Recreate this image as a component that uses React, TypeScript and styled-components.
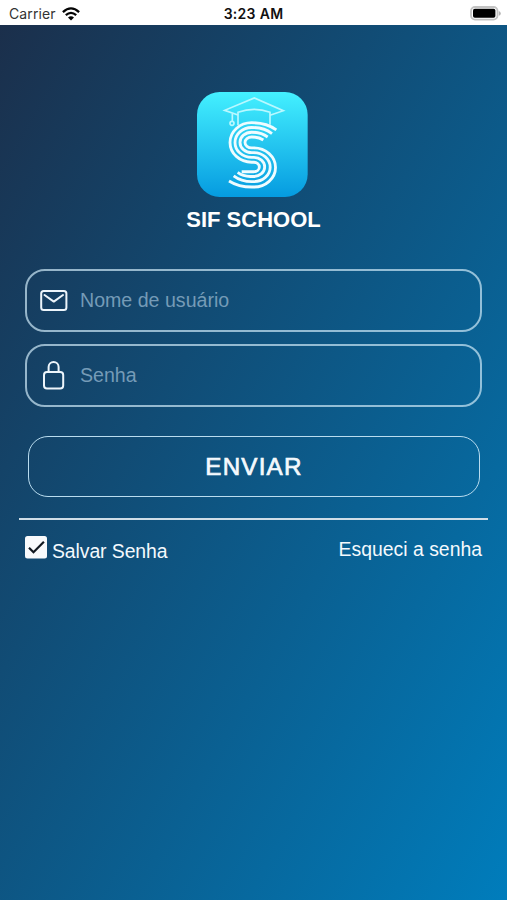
import React from "react";
import styled, { createGlobalStyle } from "styled-components";

const GlobalStyle = createGlobalStyle`
  * { box-sizing: border-box; }
  body { margin: 0; font-family: "Liberation Sans", Arial, sans-serif; }
  button, input { font: inherit; color: inherit; }
`;

const Screen = styled.div`
  width: 100%;
  height: 900px;
  display: flex;
  flex-direction: column;
  overflow: hidden;
`;

const StatusBar = styled.header`
  height: 25px;
  flex: none;
  display: grid;
  grid-template-columns: 1fr auto 1fr;
  align-items: center;
  padding: 2px 6px 0 9px;
  background: #fff;
  color: #111;
  font-family: Inter, sans-serif;
  font-size: 14px;
`;

const Carrier = styled.div`
  display: flex;
  align-items: center;
  gap: 6px;
  letter-spacing: 0.1px;
  color: #333;
`;

const Clock = styled.div`
  margin-left: -3px;
  font-weight: 600;
  letter-spacing: 0.3px;
`;

const Battery = styled.div`
  display: flex;
  justify-content: flex-end;
`;

const Page = styled.main`
  flex: 1;
  display: flex;
  flex-direction: column;
  padding: 67px 25px 0;
  color: #f4f9fd;
  background: linear-gradient(to bottom right, #1b2f4b, #007dbc);
`;

const Brand = styled.div`
  display: flex;
  flex-direction: column;
  align-items: center;
  height: 177px;
`;

const Title = styled.h1`
  margin: 10px 0 0;
  font-size: 22px;
  line-height: 26px;
  font-weight: 700;
  color: #fff;
`;

const Form = styled.form`
  display: flex;
  flex-direction: column;
`;

const Field = styled.label`
  height: 63px;
  margin-bottom: 12px;
  display: flex;
  align-items: center;
  padding-left: 11px;
  border: 2px solid rgba(205, 232, 246, 0.7);
  border-radius: 20px;
`;

const FieldIcon = styled.span`
  display: flex;
  width: 31px;
  margin-right: 11px;
  justify-content: center;
`;

const Input = styled.input`
  flex: 1;
  min-width: 0;
  padding: 0;
  border: 0;
  outline: 0;
  background: none;
  font-size: 19.6px;
  &::placeholder { color: #759bb7; opacity: 1; }
`;

const Submit = styled.button`
  height: 61px;
  margin: 17px 2px 21px 3px;
  padding: 0;
  border: 1px solid #b9dcef;
  border-radius: 20px;
  background: none;
  font-size: 24.2px;
  letter-spacing: 1.2px;
  -webkit-text-stroke: 0.7px currentColor;
`;

const Divider = styled.hr`
  width: 469px;
  height: 2px;
  margin: 0 -6px;
  border: 0;
  background: #cfdde7;
`;

const Options = styled.div`
  display: flex;
  justify-content: space-between;
  padding-top: 16px;
  font-size: 19.4px;
  line-height: 24px;
`;

const Remember = styled.div`
  display: flex;
  gap: 5px;
  letter-spacing: -0.08px;
`;

const RememberText = styled.span`
  margin-top: 3px;
`;

const Forgot = styled.a`
  margin-top: 1px;
`;

const WifiIcon = () => (
  <svg width="18" height="14" viewBox="0 0 18 14" fill="none" stroke="#050505" strokeWidth="2.3">
    <path d="M.9 5.1Q9-2.3 17.1 5.1M3.8 8.2Q9 3.6 14.2 8.2" />
    <path d="M6 10.5Q9 8 12 10.5L9 13.6Z" fill="#050505" stroke="none" />
  </svg>
);

const BatteryIcon = () => (
  <svg width="31" height="15" viewBox="0 0 31 15">
    <rect x="1" y="1" width="26.5" height="12.6" rx="4" fill="#fff" stroke="#c3c3c3" strokeWidth="1.8" />
    <rect x="3" y="2.8" width="22.4" height="9" rx="1.8" fill="#000" />
    <path d="M28.8 5v4.8q2-.7 2-2.4t-2-2.4" fill="#b5b5b5" />
  </svg>
);

const LogoSvg = styled.svg`
  margin-right: 2px;
`;

const Logo = () => (
  <LogoSvg width="111" height="105" viewBox="30 22 333 315">
    <defs>
      <linearGradient id="tile" x1="0" y1="0" x2="0" y2="1">
        <stop stopColor="#44f0ff" />
        <stop offset="1" stopColor="#059be0" />
      </linearGradient>
    </defs>
    <rect x="30" y="22" width="332" height="315" rx="68" fill="url(#tile)" />
    <g fill="none" stroke="#b9f8ff" strokeWidth="5">
      <path d="M153 91L113 77L202 40L289 78L249 92" />
      <path d="M153 122V83Q202 65 249 83V120M136 87V109" />
      <circle cx="135" cy="116" r="6" />
    </g>
    <g fill="none" stroke="#effcff" strokeWidth="8.5" transform="translate(0 -2.5) scale(1 1.022)">
      <path d="M268 135Q238 114 194 114A65 58 0 0 0 194 230H200A17 14 0 0 1 200 258H164" />
      <path d="M255 146Q232 128 194 128A50 44 0 0 0 194 216H200A33 28 0 0 1 200 272H190Q168 272 152 260" />
      <path d="M242 156Q222 142 194 142A35 30 0 0 0 194 202H200A49 42 0 0 1 200 287H195Q162 287 140 270" />
      <path d="M229 165Q216 156 194 156A20 16 0 0 0 194 188H200A65 57 0 0 1 200 303H195Q155 303 126 285" />
    </g>
  </LogoSvg>
);

const MailIcon = () => (
  <svg width="28" height="22" viewBox="0 0 28 22" fill="none" stroke="#edf5fb" strokeWidth="2" strokeLinejoin="round">
    <rect x="1.2" y="1" width="25.2" height="19" rx="2.5" />
    <path d="M4.5 5L13.8 11.6L23 5" strokeLinecap="round" />
  </svg>
);

const LockIcon = () => (
  <svg width="22" height="29" viewBox="0 0 22 29" fill="none" stroke="#edf5fb" strokeWidth="2">
    <rect x="1" y="11" width="19.2" height="16.4" rx="3" />
    <path d="M5.6 11V6a5 5 0 0 1 10 0v5" />
  </svg>
);

const CheckIcon = () => (
  <svg width="22" height="23" viewBox="0 0 22 23">
    <rect width="22" height="22.5" rx="2.5" fill="#f8fafc" />
    <path d="M4 11.7L8.5 16.2L18.9 5.8" fill="none" stroke="#111820" strokeWidth="2.2" />
  </svg>
);

export default function App() {
  return (
    <>
      <GlobalStyle />
      <Screen>
        <StatusBar>
          <Carrier>Carrier <WifiIcon /></Carrier>
          <Clock>3:23 AM</Clock>
          <Battery><BatteryIcon /></Battery>
        </StatusBar>
        <Page>
          <Brand>
            <Logo />
            <Title>SIF SCHOOL</Title>
          </Brand>
          <Form>
            <Field>
              <FieldIcon><MailIcon /></FieldIcon>
              <Input placeholder="Nome de usuário" />
            </Field>
            <Field>
              <FieldIcon><LockIcon /></FieldIcon>
              <Input type="password" placeholder="Senha" />
            </Field>
            <Submit type="button">ENVIAR</Submit>
          </Form>
          <Divider />
          <Options>
            <Remember>
              <CheckIcon />
              <RememberText>Salvar Senha</RememberText>
            </Remember>
            <Forgot>Esqueci a senha</Forgot>
          </Options>
        </Page>
      </Screen>
    </>
  );
}
